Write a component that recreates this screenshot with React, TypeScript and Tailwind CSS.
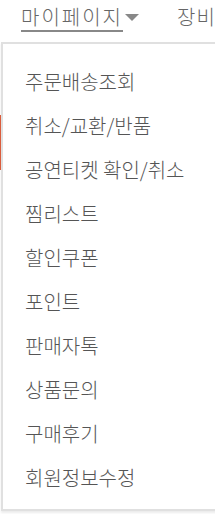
import React from "react";

const items = [
  "주문배송조회",
  "취소/교환/반품",
  "공연티켓 확인/취소",
  "찜리스트",
  "할인쿠폰",
  "포인트",
  "판매자톡",
  "상품문의",
  "구매후기",
  "회원정보수정",
];

export default function App() {
  return (
    <div
      className="relative w-[215px] h-[514px] overflow-hidden bg-white"
      style={{ fontFamily: '"Noto Sans CJK KR", "Noto Sans", sans-serif' }}
    >
      <div className="flex items-start h-[42px] pl-[21px] pt-[5px]">
        <div className="flex items-center">
          <span className="text-[20px] leading-[24px] tracking-[2px] font-light text-[#666] border-b-2 border-[#888] pb-[1px] whitespace-nowrap">
            마이페이지
          </span>
          <svg width="14" height="8" viewBox="0 0 14 8" className="ml-[2px] mt-[-2px]">
            <polygon points="0,0 14,0 7,7" fill="#888" />
          </svg>
        </div>
        <span className="ml-[38px] text-[20px] leading-[24px] tracking-[1px] font-light text-[#666] whitespace-nowrap">
          장비|
        </span>
      </div>

      <div className="absolute left-0 top-[115px] w-[2px] h-[55px] bg-[#e0603f]" />

      <div className="absolute left-[1px] top-[42px] w-[240px] h-[469px] bg-white border-2 border-[#e0e0e0] shadow-[0_2px_2px_rgba(0,0,0,0.08)]">
        <ul className="flex flex-col pl-[22px] pt-[16px]">
          {items.map((t) => (
            <li
              key={t}
              className="h-[44px] flex items-center text-[20px] font-light text-[#555] whitespace-nowrap"
            >
              {t}
            </li>
          ))}
        </ul>
      </div>
    </div>
  );
}
